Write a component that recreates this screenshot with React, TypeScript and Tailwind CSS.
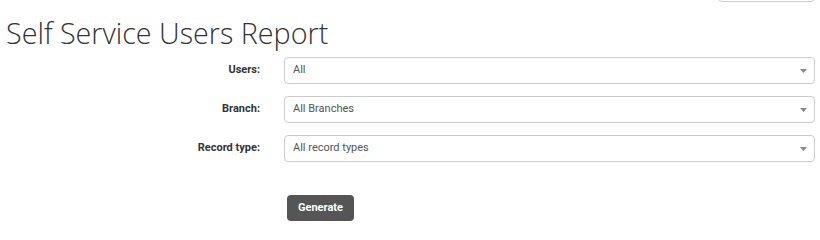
import React from "react";

const FIELDS = [
  { label: "Users:", value: "All" },
  { label: "Branch:", value: "All Branches" },
  { label: "Record type:", value: "All record types" },
];

function Select({ value }: { value: string }) {
  return (
    <div className="flex h-[27px] w-[531px] items-center justify-between rounded-[4px] border border-[#cccccc] bg-white pl-[8px] pr-[7px] text-[11px] text-[#555555]">
      <span>{value}</span>
      <svg width="7" height="4" viewBox="0 0 7 4" className="mt-[1px]">
        <path d="M0 0h7L3.5 4z" fill="#888888" />
      </svg>
    </div>
  );
}

export default function App() {
  return (
    <div className="relative h-[235px] w-[820px] overflow-hidden bg-white font-['Roboto',sans-serif]">
      <div className="absolute right-[5px] top-[-20px] h-[22px] w-[97px] rounded-[4px] border border-[#cccccc]" />
      <h1 className="pl-[6px] pt-[15px] font-['Open_Sans',sans-serif] text-[28.7px] font-light leading-[36px] text-[#333333]">
        Self Service Users Report
      </h1>
      <div className="mt-[6px] flex flex-col gap-[12px]">
        {FIELDS.map((f) => (
          <div key={f.label} className="flex items-center">
            <label className="w-[260px] text-right text-[11px] font-bold text-[#333333]">{f.label}</label>
            <div className="ml-[24px]">
              <Select value={f.value} />
            </div>
          </div>
        ))}
      </div>
      <div className="ml-[287px] mt-[32px]">
        <button className="h-[26px] w-[67px] rounded-[4px] bg-[#555555] text-[11px] font-bold text-white">
          Generate
        </button>
      </div>
    </div>
  );
}
